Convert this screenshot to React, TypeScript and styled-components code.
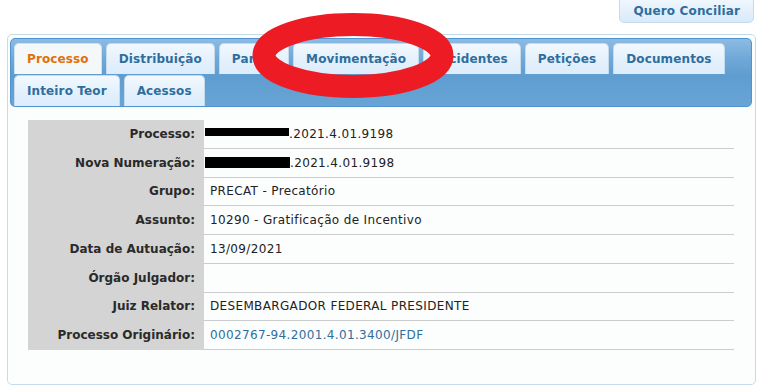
import styled, { createGlobalStyle } from "styled-components";

const Global = createGlobalStyle`
  html, body {
    margin: 0;
    background: #ffffff;
    font-family: "DejaVu Sans", Verdana, sans-serif;
  }
`;

const Page = styled.div`
  position: relative;
  width: 763px;
  height: 389px;
  box-sizing: border-box;
  padding: 0 7px;
  overflow: hidden;
`;

const TopBar = styled.div`
  display: flex;
  justify-content: flex-end;
  align-items: flex-start;
  height: 34px;
`;

const ConciliarButton = styled.button`
  margin: -4px 2px 0 0;
  height: 27px;
  box-sizing: border-box;
  padding: 3px 13px 0;
  border: 1px solid #c5dbec;
  border-radius: 5px;
  background: linear-gradient(to bottom, #f3f9fe 0%, #e4f0fc 55%, #d8eafa 100%);
  color: #2e6e9e;
  font-family: inherit;
  font-weight: bold;
  font-size: 12px;
  letter-spacing: 0.15px;
  cursor: pointer;
`;

const Panel = styled.div`
  box-sizing: border-box;
  height: 351px;
  padding: 3px 3px 0 2px;
  border: 1px solid #c5dbec;
  border-radius: 5px;
  background: #fcfdfd;
`;

const TabHeader = styled.ul`
  display: flex;
  flex-wrap: wrap;
  row-gap: 1px;
  margin: 0;
  padding: 4px 3px 0;
  list-style: none;
  border: 1px solid #4f93cf;
  border-radius: 5px;
  background: linear-gradient(to bottom, #8dbbe2 0%, #6ea8d8 30%, #5f9dd0 55%, #68a4d6 100%);
`;

const Tab = styled.li<{ $active?: boolean }>`
  height: 31px;
  box-sizing: border-box;
  margin-right: 4px;
  padding: 0 12px;
  border: 1px solid ${(p) => (p.$active ? "#cfe1f0" : "#c5dbec")};
  border-bottom: none;
  border-radius: 5px 5px 0 0;
  background: ${(p) =>
    p.$active
      ? "#f5f8f9"
      : "linear-gradient(to bottom, #f2f8fe 0%, #e5f1fc 50%, #dbecfb 100%)"};
  color: ${(p) => (p.$active ? "#e17009" : "#2e6e9e")};
  font-weight: bold;
  font-size: 12px;
  letter-spacing: 0.12px;
  line-height: 30px;
  white-space: nowrap;
  cursor: pointer;
`;

const Body = styled.div`
  padding: 13px 18px 0 18px;
`;

const InfoTable = styled.table`
  width: 706px;
  border-collapse: collapse;
  font-size: 12px;
  color: #222;
`;

const Label = styled.th`
  width: 176px;
  height: 27.75px;
  box-sizing: border-box;
  padding: 0 9px 0 0;
  background: #d4d4d4;
  text-align: right;
  font-weight: bold;
  color: #2a2a2a;
  white-space: nowrap;
`;

const Value = styled.td`
  height: 27.75px;
  padding: 0 0 0 6px;
  border-bottom: 1px solid #cccccc;
  letter-spacing: 0.35px;
  white-space: nowrap;
`;

const Link = styled.a`
  color: #2e6e9e;
  text-decoration: none;
`;

const Redact = styled.span<{ $w: number; $h: number; $shift: number }>`
  display: inline-block;
  margin-left: -5px;
  width: ${(p) => p.$w}px;
  height: ${(p) => p.$h}px;
  background: #000;
  vertical-align: ${(p) => p.$shift}px;
`;

const Annotation = styled.svg`
  position: absolute;
  left: 0;
  top: 0;
  pointer-events: none;
`;

const tabsRow = [
  "Processo",
  "Distribuição",
  "Partes",
  "Movimentação",
  "Incidentes",
  "Petições",
  "Documentos",
  "Inteiro Teor",
  "Acessos",
];

export default function App() {
  return (
    <Page>
      <Global />
      <TopBar>
        <ConciliarButton>Quero Conciliar</ConciliarButton>
      </TopBar>
      <Panel>
        <TabHeader>
          {tabsRow.map((t, i) => (
            <Tab key={t} $active={i === 0}>
              {t}
            </Tab>
          ))}
        </TabHeader>
        <Body>
          <InfoTable>
            <tbody>
              <tr>
                <Label>Processo:</Label>
                <Value>
                  <Redact $w={84} $h={8} $shift={2} />
                  .2021.4.01.9198
                </Value>
              </tr>
              <tr>
                <Label>Nova Numeração:</Label>
                <Value>
                  <Redact $w={85} $h={11} $shift={-1} />
                  .2021.4.01.9198
                </Value>
              </tr>
              <tr>
                <Label>Grupo:</Label>
                <Value>PRECAT - Precatório</Value>
              </tr>
              <tr>
                <Label>Assunto:</Label>
                <Value>10290 - Gratificação de Incentivo</Value>
              </tr>
              <tr>
                <Label>Data de Autuação:</Label>
                <Value>13/09/2021</Value>
              </tr>
              <tr>
                <Label>Órgão Julgador:</Label>
                <Value></Value>
              </tr>
              <tr>
                <Label>Juiz Relator:</Label>
                <Value>DESEMBARGADOR FEDERAL PRESIDENTE</Value>
              </tr>
              <tr>
                <Label>Processo Originário:</Label>
                <Value>
                  <Link href="#">0002767-94.2001.4.01.3400/JFDF</Link>
                </Value>
              </tr>
            </tbody>
          </InfoTable>
        </Body>
      </Panel>
      <Annotation width="763" height="389" viewBox="0 0 763 389">
        <ellipse cx="353" cy="55.5" rx="89" ry="31" fill="none" stroke="#ed1c24" strokeWidth="23" />
      </Annotation>
    </Page>
  );
}
